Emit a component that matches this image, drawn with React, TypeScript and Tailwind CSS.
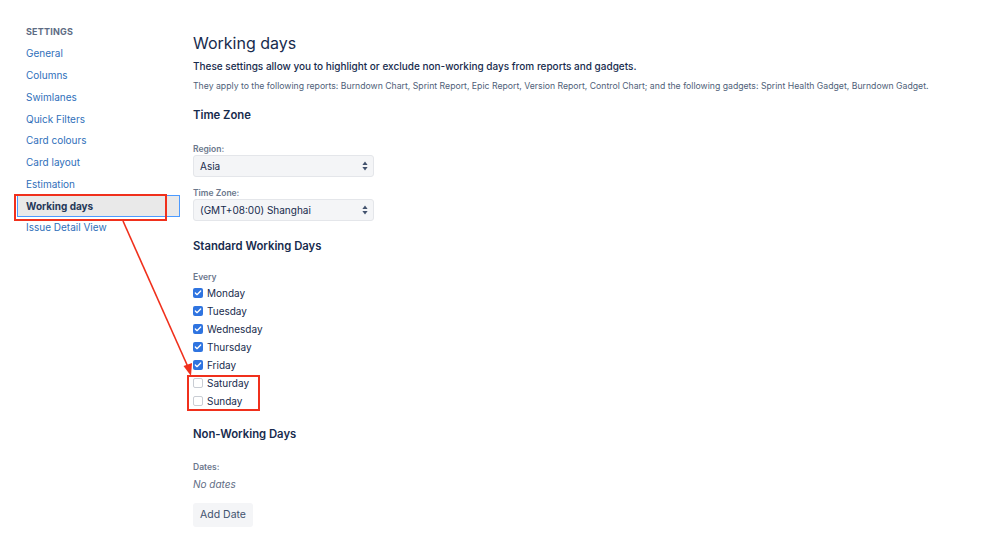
import { Check } from "lucide-react";

const NAV = ["General", "Columns", "Swimlanes", "Quick Filters", "Card colours", "Card layout", "Estimation", "Working days", "Issue Detail View"];
const DAYS: [string, boolean][] = [
  ["Monday", true], ["Tuesday", true], ["Wednesday", true], ["Thursday", true],
  ["Friday", true], ["Saturday", false], ["Sunday", false],
];

function SelectBox({ value }: { value: string }) {
  return (
    <div className="w-[181px] h-[22px] rounded-[3px] bg-[#f4f5f7] border border-[#e4e6ea] flex items-center justify-between pl-[6px] pr-[5px] text-[10px] text-[#172b4d]">
      <span>{value}</span>
      <svg width="6" height="10" viewBox="0 0 6 10">
        <path d="M3 0.5 L5.6 4 H0.4 Z" fill="#42526e" />
        <path d="M3 9.5 L5.6 6 H0.4 Z" fill="#42526e" />
      </svg>
    </div>
  );
}

function DayRow({ name, on }: { name: string; on: boolean }) {
  return (
    <div className="h-[18px] flex items-center gap-[4px]">
      {on ? (
        <span className="w-[10px] h-[10px] rounded-[2px] bg-[#2f74e0] flex items-center justify-center">
          <Check className="w-[8px] h-[8px] text-white" strokeWidth={4} />
        </span>
      ) : (
        <span className="w-[10px] h-[10px] rounded-[2px] border border-[#c9cdd4] bg-white" />
      )}
      <span className="text-[10px] text-[#172b4d]">{name}</span>
    </div>
  );
}

export default function App() {
  return (
    <div className="relative w-[998px] h-[555px] bg-white overflow-hidden font-['Inter','Liberation_Sans',sans-serif]">
      <div className="flex">
        <aside className="w-[176px] pl-[17px] pt-[25px] shrink-0">
          <div className="pl-[9px] h-[14px] leading-[14px] text-[9px] font-bold tracking-wide uppercase text-[#5e6c84]">Settings</div>
          <nav className="mt-[4px] w-[163px]">
            {NAV.map(item =>
              item === "Working days" ? (
                <div key={item} className="h-[21.75px] flex items-center pl-[8px] bg-[#e9e9e9] border border-[#4c9aff] text-[10px] font-bold text-[#253858]">
                  {item}
                </div>
              ) : (
                <div key={item} className="h-[21.75px] flex items-center pl-[9px] text-[10px] text-[#2f6fba]">
                  {item}
                </div>
              )
            )}
          </nav>
        </aside>

        <main className="pt-[31px] text-[#172b4d] pl-[17px]">
          <h1 className="text-[16px] leading-[24px] font-normal">Working days</h1>
          <p className="mt-[3px] text-[10px] leading-[16px] font-medium">
            These settings allow you to highlight or exclude non-working days from reports and gadgets.
          </p>
          <p className="mt-[5px] text-[8.7px] leading-[14px] text-[#505f79]">
            They apply to the following reports: Burndown Chart, Sprint Report, Epic Report, Version Report, Control Chart; and the following gadgets: Sprint Health Gadget, Burndown Gadget.
          </p>

          <h2 className="mt-[13px] text-[11.3px] leading-[18px] font-semibold">Time Zone</h2>
          <div className="mt-[19px] text-[8.5px] leading-[12px] font-semibold text-[#6b778c]">Region:</div>
          <SelectBox value="Asia" />
          <div className="mt-[10px] text-[8.5px] leading-[12px] font-semibold text-[#6b778c]">Time Zone:</div>
          <SelectBox value="(GMT+08:00) Shanghai" />

          <h2 className="mt-[16px] text-[11.3px] leading-[18px] font-semibold">Standard Working Days</h2>
          <div className="mt-[16px] text-[8.5px] leading-[12px] font-semibold text-[#6b778c]">Every</div>
          <div className="mt-[1px]">
            {DAYS.map(([d, on]) => <DayRow key={d} name={d} on={on} />)}
          </div>

          <h2 className="mt-[15px] text-[11.3px] leading-[18px] font-semibold">Non-Working Days</h2>
          <div className="mt-[18px] text-[8.5px] leading-[12px] font-semibold text-[#6b778c]">Dates:</div>
          <div className="mt-[3px] text-[10px] leading-[16px] italic text-[#5e6c84]">No dates</div>
          <button className="mt-[11px] h-[24px] px-[7px] rounded-[3px] bg-[#f4f5f7] text-[10.5px] text-[#42526e]">Add Date</button>
        </main>
      </div>

      {/* annotations */}
      <div className="absolute left-[14px] top-[194px] w-[153px] h-[27px] border-2 border-[#f0301c]" />
      <div className="absolute left-[187px] top-[375px] w-[73px] h-[36px] border-2 border-[#f0301c]" />
      <svg className="absolute left-0 top-0 pointer-events-none" width="998" height="555">
        <line x1="123" y1="221" x2="188" y2="367" stroke="#f0301c" strokeWidth="1.6" />
        <path d="M191 376 L183.5 366 L192 363 Z" fill="#f0301c" />
      </svg>
    </div>
  );
}
